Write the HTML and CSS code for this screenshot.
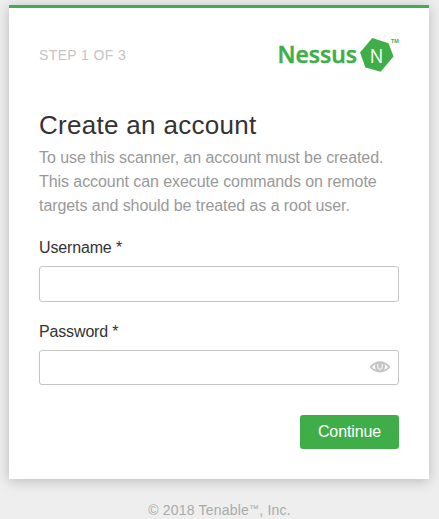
FILE: index.html
```html
<!DOCTYPE html>
<html lang="en">
<head>
	<meta charset="utf-8">
	<title>Nessus / Setup</title>
	<link rel="stylesheet" href="styles.css">
</head>
<body>

<div class="setup">
	<div class="setup-header">
		<span class="step">STEP 1 OF 3</span>
		<svg class="logo" width="122" height="38" viewBox="0 0 122 38">
			<text class="logo-name" x="0.5" y="26.5" textLength="79.5" lengthAdjust="spacingAndGlyphs">Nessus</text>
			<polygon class="logo-shape" points="95.3,2 111.5,7.3 116.5,20.5 103.7,35.7 88.5,31.5 83,16.5"/>
			<text class="logo-n" x="92.8" y="26.5" textLength="13.5" lengthAdjust="spacingAndGlyphs">N</text>
			<text class="logo-tm" x="114" y="7" textLength="8" lengthAdjust="spacingAndGlyphs">TM</text>
		</svg>
	</div>

	<h1>Create an account</h1>
	<p class="intro">To use this scanner, an account must be created.<br>This account can execute commands on remote<br>targets and should be treated as a root user.</p>

	<form>
		<label for="username"><span>Username *</span></label>
		<input type="text" id="username">

		<label for="password"><span>Password *</span></label>
		<div class="password">
			<input type="password" id="password">
			<svg class="eye" width="22" height="14" viewBox="0 0 22 14">
				<path d="M0.5 7 C6 -0.6 16 -0.6 21.5 7 C16 14.2 6 14.2 0.5 7 Z"/>
				<path class="white" d="M3 7 Q4.6 5.2 6.4 4.3 Q5.4 7 6.8 9.8 Q4.8 8.9 3 7 Z M19 7 Q17.4 5.2 15.6 4.3 Q16.6 7 15.2 9.8 Q17.2 8.9 19 7 Z"/>
				<path class="ring" d="M8.8 4 V7 A2.2 2.4 0 0 0 13.2 7 V4"/>
			</svg>
		</div>

		<div class="actions">
			<button type="button">Continue</button>
		</div>
	</form>
</div>

<div class="footer">&copy; 2018 Tenable<span class="tm">&trade;</span>, Inc.</div>

</body>
</html>
```

FILE: styles.css
```css
* {
	box-sizing: border-box;
}

body {
	margin: 0;
	padding-top: 5px;
	height: 519px;
	overflow: hidden;
	background: #eee;
	color: #333;
	font-family: "Liberation Sans", Arial, sans-serif;
	font-size: 16px;
}

.setup {
	width: 420px;
	height: 474px;
	margin: 0 10px 0 9px;
	padding: 27px 30px 0;
	background: #fff;
	border-top: 3px solid #43ac50;
	box-shadow: 0 2px 12px rgba(0, 0, 0, 0.22);
}

/* step counter and logo */
.setup-header {
	display: flex;
	justify-content: space-between;
	height: 73px;
}

.step {
	padding-top: 11px;
	color: #c5c5c5;
	font-size: 14px;
	letter-spacing: 0.38px;
	line-height: 18px;
}

.logo {
	margin-top: 1px;
	overflow: visible;
}

.logo-name {
	fill: #3fae49;
	stroke: #3fae49;
	stroke-width: 0.5;
	font: 600 23px "Open Sans", sans-serif;
}

.logo-shape {
	fill: #3fae49;
}

.logo-n {
	fill: #fff;
	font: 20px "Open Sans", sans-serif;
}

.logo-tm {
	fill: #3fae49;
	font: bold 5.5px "Open Sans", sans-serif;
}

h1 {
	margin: 0;
	font-size: 26px;
	font-weight: normal;
	letter-spacing: 0.3px;
	line-height: 34px;
}

.intro {
	margin: 4px 0 20px;
	color: #999;
	letter-spacing: -0.07px;
	line-height: 24px;
	white-space: nowrap;
}

label {
	display: block;
	height: 28px;
	letter-spacing: -0.15px;
	line-height: 20px;
}

input {
	display: block;
	width: 100%;
	height: 36px;
	margin: 0 0 20px;
	padding: 0 10px;
	border: 1px solid #c5c5c5;
	border-radius: 3px;
	background: #fff;
}

.password {
	position: relative;
}

.password input {
	height: 35px;
	margin-bottom: 30px;
}

.eye {
	position: absolute;
	top: 10px;
	right: 8px;
	fill: #c5c5c5;
}

.eye .white {
	fill: #fff;
}

.eye .ring {
	fill: none;
	stroke: #fff;
	stroke-width: 1;
}

.actions {
	text-align: right;
}

button {
	width: 99px;
	height: 34px;
	padding: 0;
	border: 0;
	border-radius: 3px;
	background: #3fae49;
	color: #fff;
	font: 16px "Liberation Sans", Arial, sans-serif;
	letter-spacing: -0.1px;
}

.footer {
	margin-top: 22px;
	color: #aaa;
	font-size: 14px;
	letter-spacing: 0.2px;
	line-height: 18px;
	text-align: center;
}

.footer .tm {
	font-size: 10px;
	line-height: 1;
	vertical-align: 3px;
}
```
